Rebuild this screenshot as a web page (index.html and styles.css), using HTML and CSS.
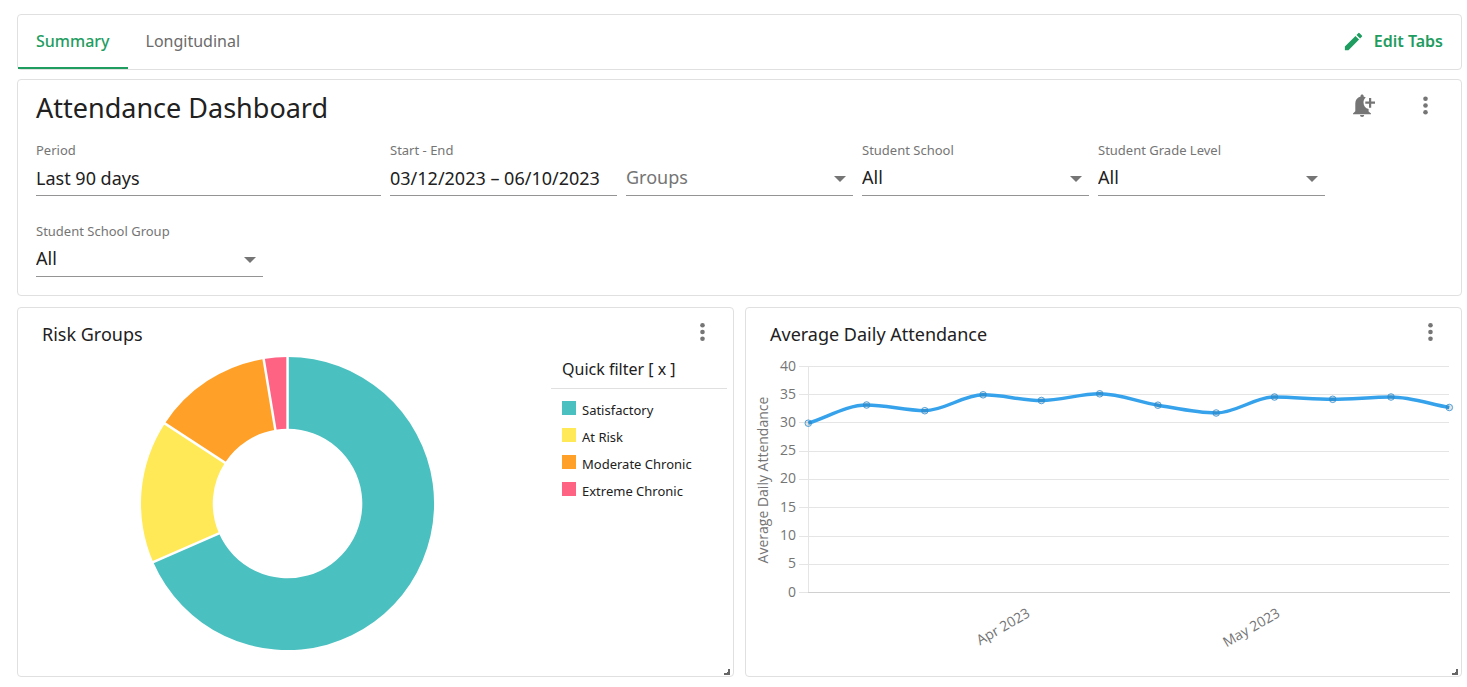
FILE: index.html
```html
<!DOCTYPE html>
<html lang="en">
<head>
<meta charset="utf-8">
<meta name="viewport" content="width=device-width, initial-scale=1">
<title>Attendance Dashboard</title>
<link rel="stylesheet" href="styles.css">
</head>
<body>
<nav class="card tabbar">
  <div class="tabs" role="tablist">
    <button class="tab tab-active" role="tab" aria-selected="true">Summary</button>
    <button class="tab" role="tab" aria-selected="false">Longitudinal</button>
  </div>
  <button class="edit-tabs">
    <svg class="icon" viewBox="0 0 24 24" aria-hidden="true"><path d="M3 17.25V21h3.75L17.81 9.94l-3.75-3.75L3 17.25zM20.71 7.04a1 1 0 0 0 0-1.41l-2.34-2.34a1 1 0 0 0-1.41 0l-1.83 1.83 3.75 3.75 1.83-1.83z"/></svg>
    <span>Edit Tabs</span>
  </button>
</nav>

<header class="card filters">
  <div class="heading">
    <h1 class="title">Attendance Dashboard</h1>
    <div class="actions">
      <button class="icon-button" aria-label="Add alert">
        <svg class="icon-bell" viewBox="0 0 24 24" aria-hidden="true"><path d="M8 21h4.200a2.100 2.100 0 0 1-4.200 0zM10.100 0.600c.9 0 1.500.6 1.500 1.400v.6c.8.2 1.500.5 2.200 1-1.600 1.400-2.300 3-2.300 4.900 0 3.200 1.900 5.700 5.100 6.600v2.500L19 19.500v.7H1v-.7l2.300-2.300V9.400c0-3.400 2-6 5.300-6.800V2c0-.8.6-1.400 1.500-1.400z"/><path d="M17 4h2.200v3.500h3.800v2.300h-3.800v3.900H17V9.800h-3.700V7.500H17z"/></svg>
      </button>
      <button class="icon-button" aria-label="Dashboard menu">
        <svg class="icon-dots" viewBox="0 0 24 24" aria-hidden="true"><circle cx="12.500" cy="4.800" r="2.300"/><circle cx="12.500" cy="11.500" r="2.300"/><circle cx="12.500" cy="18.200" r="2.300"/></svg>
      </button>
    </div>
  </div>
  <form class="fields">
    <div class="field field-wide">
      <label class="label" for="period">Period</label>
      <input class="control" id="period" type="text" value="Last 90 days">
    </div>
    <div class="field">
      <label class="label" for="range">Start - End</label>
      <input class="control" id="range" type="text" value="03/12/2023 – 06/10/2023">
    </div>
    <div class="field field-bare">
      <select class="control control-select control-empty" id="groups" aria-label="Groups"><option>Groups</option></select>
      <span class="caret"></span>
    </div>
    <div class="field">
      <label class="label" for="school">Student School</label>
      <select class="control control-select" id="school"><option>All</option></select>
      <span class="caret"></span>
    </div>
    <div class="field">
      <label class="label" for="grade">Student Grade Level</label>
      <select class="control control-select" id="grade"><option>All</option></select>
      <span class="caret"></span>
    </div>
    <div class="field">
      <label class="label" for="school-group">Student School Group</label>
      <select class="control control-select" id="school-group"><option>All</option></select>
      <span class="caret"></span>
    </div>
  </form>
</header>

<main class="widgets">
  <section class="card widget">
    <div class="widget-head">
      <h2 class="widget-title">Risk Groups</h2>
      <button class="icon-button" aria-label="Risk Groups menu">
        <svg class="icon-dots" viewBox="0 0 24 24" aria-hidden="true"><circle cx="12.500" cy="5.300" r="2.300"/><circle cx="12.500" cy="12" r="2.300"/><circle cx="12.500" cy="18.700" r="2.300"/></svg>
      </button>
    </div>
    <div class="risk">
      <div class="donut-area">
        <svg class="donut" viewBox="-148 -148 296 296" role="img" aria-label="Risk groups by share of students">
          <path class="satisfactory" d="M0-147A147 147 0 1 1-134.800 58.700L-68.800 29.900A75 75 0 1 0 0-75Z"/>
          <path class="at-risk" d="M-134.800 58.700A147 147 0 0 1-123.100-80.300L-62.800-41A75 75 0 0 0-68.800 29.900Z"/>
          <path class="moderate" d="M-123.100-80.300A147 147 0 0 1-24-145L-12.200-74A75 75 0 0 0-62.800-41Z"/>
          <path class="extreme" d="M-24-145A147 147 0 0 1 0-147V-75A75 75 0 0 0-12.200-74Z"/>
          <path class="divider" stroke-width="2.500" d="M0-148V-73M-136 59.200L-67 29.100M-124-80.900L-61-39.800M-24.200-146.300L-11.900-72"/>
        </svg>
      </div>
      <aside class="legend">
        <h3 class="legend-title">Quick filter [ x ]</h3>
        <ul class="legend-list">
          <li class="legend-item"><span class="swatch swatch-satisfactory"></span>Satisfactory</li>
          <li class="legend-item"><span class="swatch swatch-at-risk"></span>At Risk</li>
          <li class="legend-item"><span class="swatch swatch-moderate"></span>Moderate Chronic</li>
          <li class="legend-item"><span class="swatch swatch-extreme"></span>Extreme Chronic</li>
        </ul>
      </aside>
    </div>
    <svg class="grip" viewBox="0 0 8 8" aria-hidden="true"><path d="M5 1H7V7H1V5H4V4H5Z"/></svg>
  </section>

  <section class="card widget">
    <div class="widget-head">
      <h2 class="widget-title">Average Daily Attendance</h2>
      <button class="icon-button" aria-label="Average Daily Attendance menu">
        <svg class="icon-dots" viewBox="0 0 24 24" aria-hidden="true"><circle cx="12.500" cy="5.300" r="2.300"/><circle cx="12.500" cy="12" r="2.300"/><circle cx="12.500" cy="18.700" r="2.300"/></svg>
      </button>
    </div>
    <svg class="line-chart" viewBox="0 0 715 320" role="img" aria-label="Average daily attendance by week">
      <path class="grid" d="M53 10.500H703M53 38.500H703M53 66.500H703M53 95.500H703M53 123.500H703M53 151.500H703M53 180.500H703M53 208.500H703M53 236.500H703M62.500 10V236"/>
      <path class="baseline" d="M62 236.500H704"/>
      <g class="ticks">
        <text x="50" y="15">40</text><text x="50" y="43">35</text><text x="50" y="71">30</text><text x="50" y="99">25</text><text x="50" y="127">20</text><text x="50" y="156">15</text><text x="50" y="184">10</text><text x="50" y="212">5</text><text x="50" y="241">0</text>
        <text transform="translate(285 260) rotate(-30)">Apr 2023</text>
        <text transform="translate(535 260) rotate(-30)">May 2023</text>
      </g>
      <text class="axis-title" transform="translate(22 124) rotate(-90)">Average Daily Attendance</text>
      <path class="series" stroke-width="3.500" d="M62.300 67.200C81.700 61.100 101.200 49 120.600 49S159.400 54.700 178.800 54.700S217.700 38.800 237.100 38.800S276 44.500 295.400 44.500S334.300 37.800 353.700 37.800S392.500 46 411.900 49.200S450.800 57 470.200 57S509.100 41 528.500 41S567.300 43.300 586.700 43.300S625.600 41 645 41S683.900 48 703.300 51.500"/>
      <g class="points">
        <circle cx="62.300" cy="67.200" r="3.300"/><circle cx="120.600" cy="49" r="3.300"/><circle cx="178.800" cy="54.700" r="3.300"/><circle cx="237.100" cy="38.800" r="3.300"/><circle cx="295.400" cy="44.500" r="3.300"/><circle cx="353.700" cy="37.800" r="3.300"/><circle cx="411.900" cy="49.200" r="3.300"/><circle cx="470.200" cy="57" r="3.300"/><circle cx="528.500" cy="41" r="3.300"/><circle cx="586.700" cy="43.300" r="3.300"/><circle cx="645" cy="41" r="3.300"/><circle cx="703.300" cy="51.500" r="3.300"/>
      </g>
    </svg>
    <svg class="grip" viewBox="0 0 8 8" aria-hidden="true"><path d="M5 1H7V7H1V5H4V4H5Z"/></svg>
  </section>
</main>
</body>
</html>
```
FILE: styles.css
```css
* {
  box-sizing: border-box;
}

body {
  margin: 0;
  padding: 14px 5px 9px 17px;
  background: #fff;
  color: #212121;
  font-family: "Noto Sans", sans-serif;
}

button,
input,
select {
  margin: 0;
  padding: 0;
  border: 0;
  background: none;
  color: inherit;
  font: inherit;
}

h1,
h2,
h3,
ul {
  margin: 0;
  padding: 0;
  font-weight: 400;
}

.card {
  border: 1px solid #e0e0e0;
  border-radius: 4px;
  background: #fff;
}

.tabbar {
  display: flex;
  justify-content: space-between;
  height: 56px;
  padding-right: 18px;
}

.tabs {
  display: flex;
}

.tab {
  padding: 0 18px;
  border-bottom: 2px solid transparent;
  color: #6b6b6b;
  font-size: 16px;
}

.tab-active {
  border-bottom-color: #1f9d61;
  color: #1f9d61;
  font-weight: 500;
}

.edit-tabs {
  display: flex;
  align-items: center;
  gap: 9px;
  padding-bottom: 2px;
  color: #1f9d61;
  font-size: 16px;
  font-weight: 600;
}

.icon {
  width: 23px;
  height: 23px;
  fill: currentColor;
}

.filters {
  margin-top: 9px;
  padding: 8px 9px 18px 18px;
}

.heading {
  display: flex;
  justify-content: space-between;
}

.title {
  font-size: 27px;
  line-height: 40px;
}

.actions {
  display: flex;
  gap: 25px;
  padding-right: 9px;
}

.icon-button {
  display: flex;
  align-items: center;
  justify-content: center;
  width: 36px;
  height: 36px;
  color: #757575;
}

.icon-bell,
.icon-dots {
  width: 24px;
  height: 24px;
  fill: currentColor;
}

.fields {
  display: flex;
  flex-wrap: wrap;
  row-gap: 25px;
  padding-top: 12px;
}

.field {
  position: relative;
  display: flex;
  flex: 0 0 calc(100% / 6);
  flex-direction: column;
  padding-right: 9px;
}

.field-wide {
  flex-basis: 25%;
}

.field-bare {
  justify-content: flex-end;
}

.label {
  color: #757575;
  font-size: 13px;
  line-height: 20px;
}

.control {
  width: 100%;
  height: 35px;
  margin-top: 1px;
  border-bottom: 1px solid #949494;
  border-radius: 0;
  font-size: 18px;
}

.control-select {
  padding-bottom: 2px;
  appearance: none;
}

.control-empty {
  color: #757575;
}

.caret {
  position: absolute;
  right: 16px;
  bottom: 14px;
  border: 6px solid transparent;
  border-top-color: #757575;
  border-bottom: 0;
  pointer-events: none;
}

.widgets {
  display: grid;
  grid-template-columns: 1fr 1fr;
  gap: 11px;
  margin-top: 11px;
}

.widget {
  position: relative;
}

.widget-head {
  display: flex;
  align-items: flex-start;
  justify-content: space-between;
  height: 48px;
  padding: 6px 13px 0 24px;
}

.widget-title {
  padding-top: 6px;
  font-size: 18px;
  line-height: 28px;
}

.risk {
  display: flex;
  padding: 0 6px 22px;
}

.donut-area {
  flex: 1;
}

.donut {
  display: block;
  width: 56%;
  margin: 0 auto;
}

.satisfactory {
  fill: #4bc0c0;
}

.at-risk {
  fill: #ffe957;
}

.moderate {
  fill: #ffa128;
}

.extreme {
  fill: #ff6384;
}

.divider {
  fill: none;
  stroke: #fff;
}

.legend {
  width: 176px;
}

.legend-title {
  padding: 0 11px 6px;
  border-bottom: 1px solid #e0e0e0;
  font-size: 16px;
  line-height: 26px;
}

.legend-list {
  padding: 7px 11px;
  list-style: none;
}

.legend-item {
  display: flex;
  align-items: center;
  gap: 6px;
  height: 27px;
  font-size: 13px;
}

.swatch {
  width: 14px;
  height: 14px;
  margin-bottom: 3px;
}

.swatch-satisfactory {
  background: #4bc0c0;
}

.swatch-at-risk {
  background: #ffe957;
}

.swatch-moderate {
  background: #ffa128;
}

.swatch-extreme {
  background: #ff6384;
}

.grip {
  position: absolute;
  right: 2px;
  bottom: 0;
  width: 8px;
  height: 8px;
  fill: #666;
}

.line-chart {
  display: block;
  width: 100%;
  font-family: "Open Sans", sans-serif;
  font-size: 14px;
}

.grid {
  stroke: #e5e5e5;
}

.baseline {
  stroke: #d0d0d0;
}

.ticks text {
  fill: #757575;
  text-anchor: end;
}

.axis-title {
  fill: #757575;
  text-anchor: middle;
}

.series {
  fill: none;
  stroke: #36a2eb;
}

.points {
  fill: rgba(0, 0, 0, 0.1);
  stroke: #2b8fd6;
  stroke-opacity: 0.8;
}
```
